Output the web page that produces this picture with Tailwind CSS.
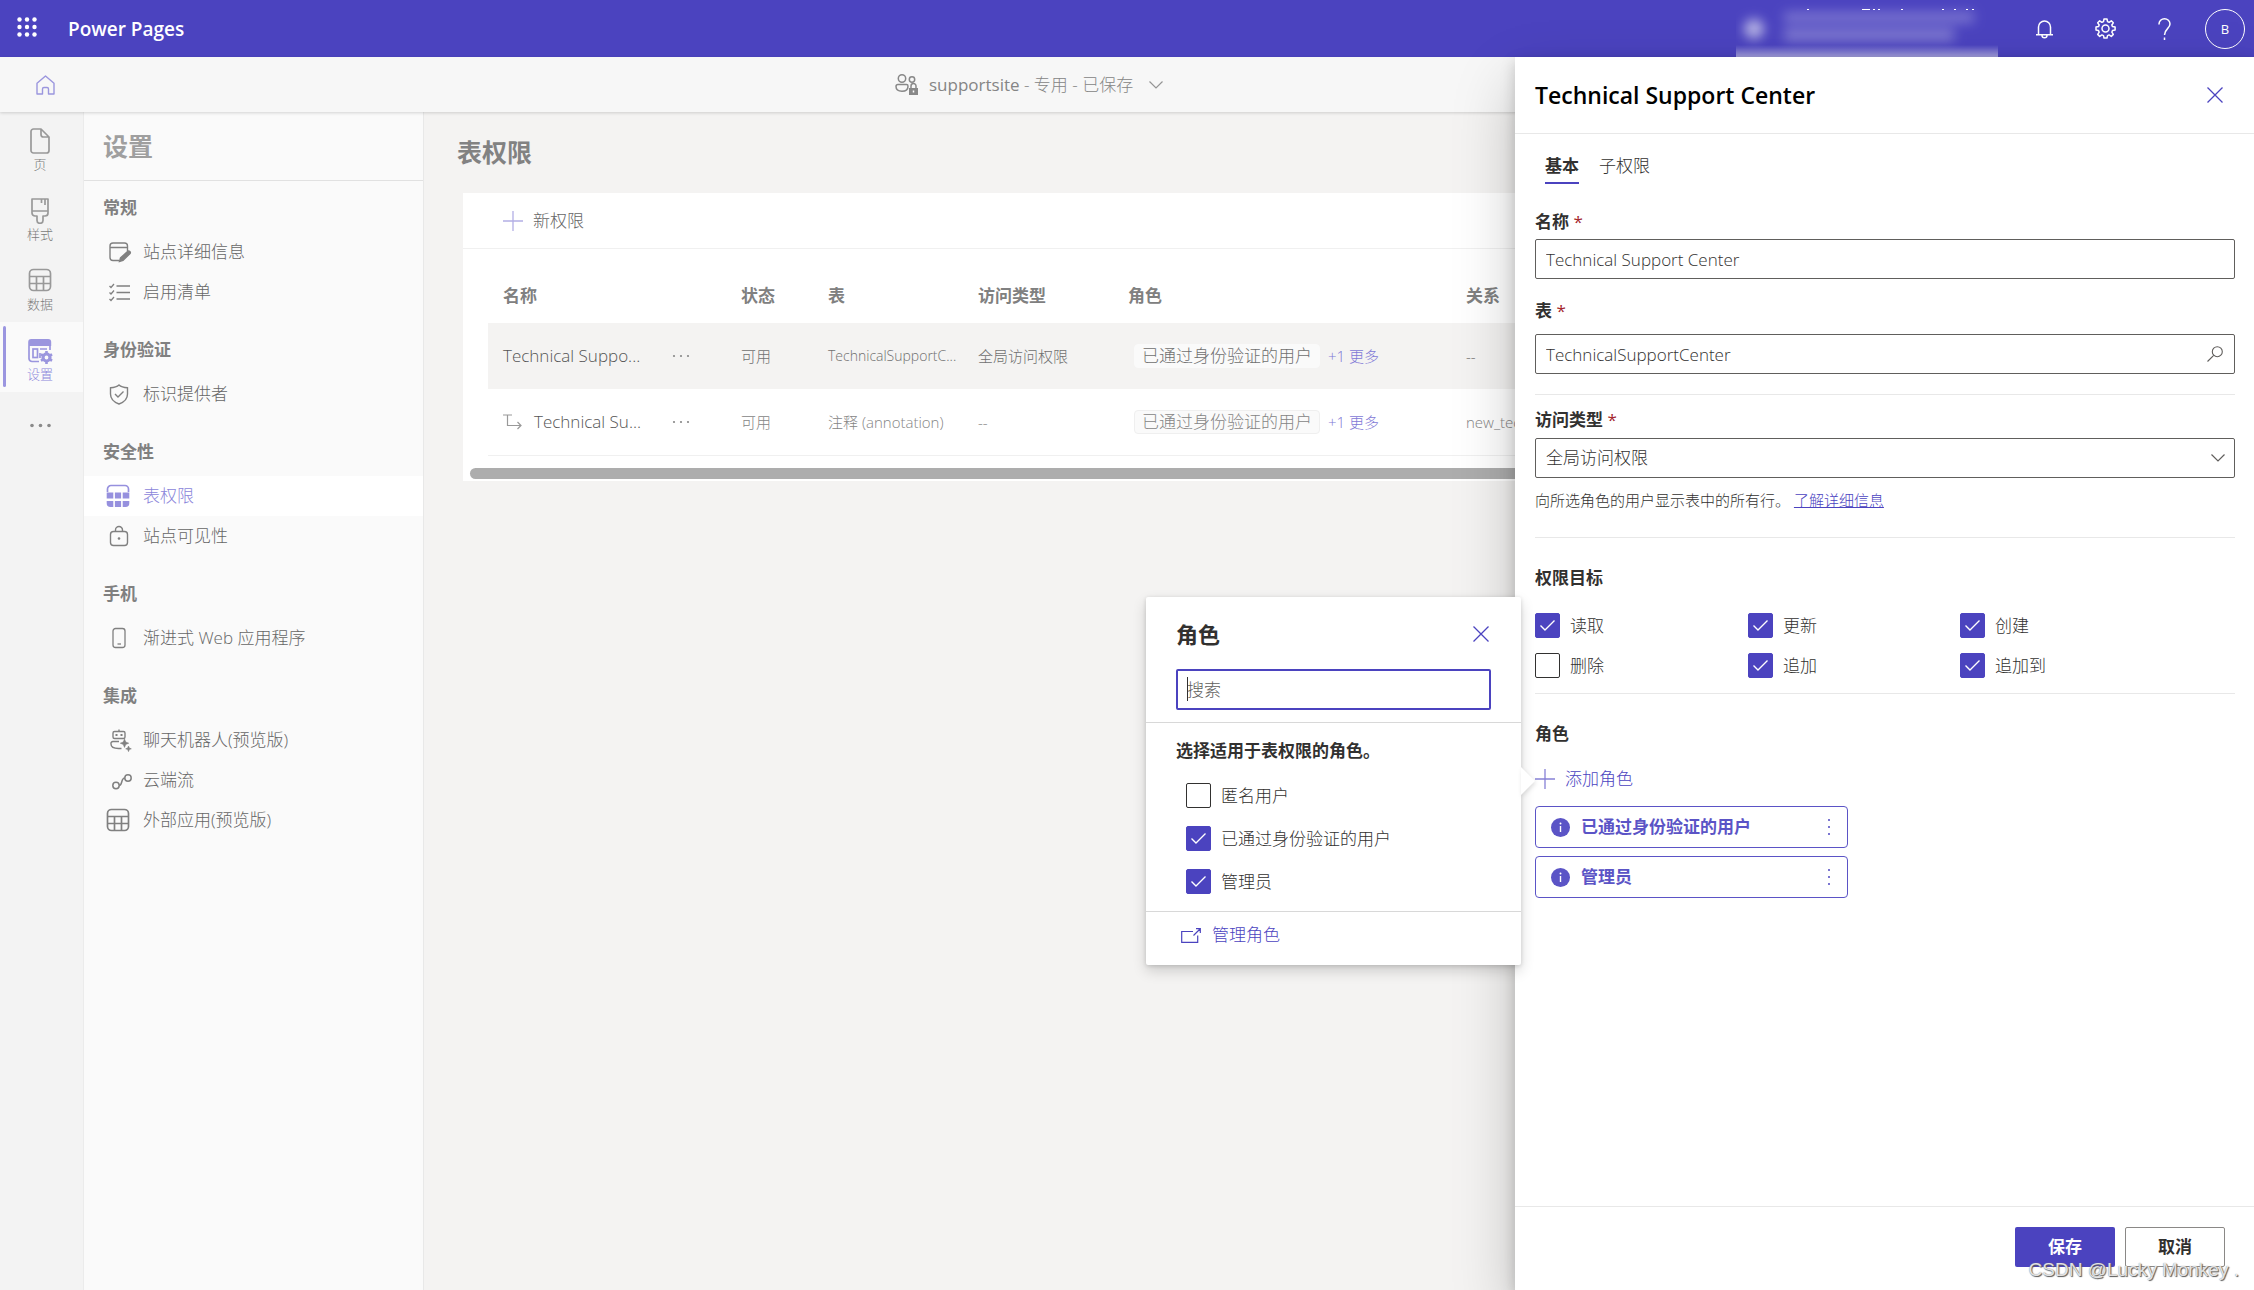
<!DOCTYPE html>
<html lang="zh-CN">
<head>
<meta charset="utf-8">
<title>Power Pages</title>
<script src="https://cdn.jsdelivr.net/npm/@tailwindcss/browser@4"></script>
</head>
<body class="relative flex h-screen flex-col overflow-hidden bg-[#f4f3f2] font-['Open_Sans','Noto_Sans_CJK_SC',sans-serif] text-[17px] leading-[22px] text-[#323130]">
<svg class="hidden">
  <symbol id="grid" viewBox="0 0 24 24"><rect x="1.5" y="1.5" width="21" height="21" rx="4" fill="none" stroke="currentColor" stroke-width="1.7"/><path d="M1.5 8.5h21M1.5 15.5h21M8.5 8.5v14M15.5 8.5v14" fill="none" stroke="currentColor" stroke-width="1.7"/></symbol>
  <symbol id="check" viewBox="0 0 25 25"><path d="M5.5 12.5l4.5 4.500L19.500 7.500" fill="none" stroke="#fff" stroke-width="1.400"/></symbol>
  <symbol id="close" viewBox="0 0 16 16"><path d="M.5.5l15 15M15.500.5l-15 15" fill="none" stroke="currentColor" stroke-width="1.300"/></symbol>
  <symbol id="plus" viewBox="0 0 20 20"><path d="M10 0v20M0 10h20" fill="none" stroke="currentColor" stroke-width="1.300"/></symbol>
  <symbol id="chev" viewBox="0 0 14 8"><path d="M.5.5L7 7 13.500.5" fill="none" stroke="currentColor" stroke-width="1.200"/></symbol>
  <symbol id="info" viewBox="0 0 19 19"><circle cx="9.500" cy="9.500" r="9.500" fill="currentColor"/><path d="M9.500 8v6" stroke="#fff" stroke-width="1.400"/><circle cx="9.500" cy="5.500" r="1" fill="#fff"/></symbol>
  <symbol id="more" viewBox="0 0 18 4"><g fill="currentColor"><circle cx="2" cy="2" r="1.100"/><circle cx="9" cy="2" r="1.100"/><circle cx="16" cy="2" r="1.100"/></g></symbol>
</svg>

<header class="flex h-[57px] shrink-0 items-center bg-[#4b43bf] pr-[9px] pl-[17px] text-white">
  <button aria-label="应用" class="mr-[31px] -mt-1"><svg width="20" height="20" viewBox="0 0 20 20" fill="#fff"><circle cx="2.500" cy="2.500" r="2.200"/><circle cx="10" cy="2.500" r="2.200"/><circle cx="17.500" cy="2.500" r="2.200"/><circle cx="2.500" cy="10" r="2.200"/><circle cx="10" cy="10" r="2.200"/><circle cx="17.500" cy="10" r="2.200"/><circle cx="2.500" cy="17.500" r="2.200"/><circle cx="10" cy="17.500" r="2.200"/><circle cx="17.500" cy="17.500" r="2.200"/></svg></button>
  <h1 class="text-[19px] leading-6 font-semibold">Power Pages</h1>
  <svg class="ml-auto h-[57px] w-[262px]" viewBox="0 0 262 57" aria-hidden="true">
    <defs>
      <filter id="soft" x="-30%" y="-60%" width="160%" height="220%"><feGaussianBlur stdDeviation="6"/></filter>
      <linearGradient id="fade" x1="0" y1="0" x2="0" y2="1"><stop offset="0" stop-color="#fff" stop-opacity="0"/><stop offset="1" stop-color="#fff" stop-opacity=".5"/></linearGradient>
    </defs>
    <g fill="#fff"><path d="M71 9h2v1h-2zM126 9h8v1h-8zM137 9h2v1h-2zM142 9h2v1h-2zM165 9h2v1h-2zM206 9h2v1h-2zM218 9h2v1h-2zM230 9h2v1h-2zM236 9h2v1h-2z"/></g>
    <g filter="url(#soft)" fill="#fff"><circle cx="18" cy="29" r="10" opacity=".6"/><rect x="48" y="12" width="190" height="11" opacity=".26"/><rect x="48" y="29" width="170" height="12" opacity=".3"/></g>
    <rect y="45" width="262" height="12" fill="url(#fade)"/>
  </svg>
  <div class="ml-[38px] flex items-center gap-[42px]">
    <button aria-label="通知"><svg width="17" height="20" viewBox="0 0 17 20" fill="none" stroke="#fff" stroke-width="1.500"><path d="M2.500 15.500V8a6 6 0 0 1 12 0v7.500M0 15.800h17M6 16.500a2.500 2.300 0 0 0 5 0"/></svg></button>
    <button aria-label="设置"><svg width="21" height="21" viewBox="0 0 21 21" fill="none" stroke="#fff" stroke-width="1.500" stroke-linejoin="round"><circle cx="10.500" cy="10.500" r="3.500"/><path d="M9 1h3l.5 2.600 1.600.7L16.300 2.800l2 2-1.500 2.200.7 1.600 2.600.5v3l-2.600.5-.7 1.600 1.500 2.200-2 2-2.200-1.500-1.600.7L12 20H9l-.5-2.400-1.600-.7-2.200 1.500-2-2 1.500-2.200-.7-1.600L1 12.100v-3l2.500-.5.7-1.600-1.500-2.200 2-2 2.200 1.500 1.600-.7z"/></svg></button>
    <button aria-label="帮助"><svg width="13" height="22" viewBox="0 0 13 22" fill="none" stroke="#fff" stroke-width="1.500"><path d="M1 6.500V6a5.500 5.200 0 0 1 11 0c0 4.500-5.500 5-5.500 11M6.500 19.500V22"/></svg></button>
    <button class="-ml-2 flex size-10 items-center justify-center rounded-full border border-white text-[13px]">B</button>
  </div>
</header>

<div class="z-10 flex h-[55px] shrink-0 items-center bg-[#f7f7f7] pl-9 text-[#959595] shadow-[0_1px_3px_rgba(0,0,0,0.16)]">
  <a href="#" aria-label="主页" class="text-[#9b96de]"><svg width="19" height="20" viewBox="0 0 19 20" fill="none" stroke="currentColor" stroke-width="1.400" stroke-linejoin="round"><path d="M1 8.300L9.500 1 18 8.300V19h-5.500v-5a1.500 1.500 0 0 0-1.500-1.500H8A1.500 1.500 0 0 0 6.500 14v5H1z"/></svg></a>
  <button class="ml-[840px] flex items-center">
    <svg width="24" height="22" viewBox="0 0 24 22" fill="none" stroke="#888" stroke-width="1.500"><circle cx="7" cy="4.500" r="3.700"/><circle cx="17" cy="5.500" r="2.700"/><path d="M3 10.500h8.500c1 0 1.500.8 1.500 1.700 0 3.300-2.500 5-6 5s-6-1.700-6-4.700c0-1.200.8-2 2-2z"/><rect x="14" y="14" width="9" height="7" fill="#888" stroke="none"/><path d="M16 14v-2a2.500 2.500 0 0 1 5 0v2"/><path d="M18.500 16.500v2" stroke="#fff"/></svg>
    <span class="ml-[10px] font-light text-[#858585]"><span class="font-normal text-[#858585]">supportsite</span> - 专用 - 已保存</span>
    <svg class="ml-4" width="14" height="8"><use href="#chev"/></svg>
  </button>
</div>

<div class="flex min-h-0 flex-1">
  <nav aria-label="工作区" class="flex w-[84px] shrink-0 flex-col border-r border-[#ebebeb] bg-[#f3f3f3] text-[13px] leading-4 font-light text-[#7c7c7c]">
    <a href="#" class="flex h-[70px] flex-col items-center gap-[2px] pt-4 pr-[3px]"><svg width="20" height="26" viewBox="0 0 20 26" fill="none" stroke="#999" stroke-width="1.700" stroke-linejoin="round"><path d="M3.500 1H11l8 8v13.500a2.500 2.500 0 0 1-2.500 2.500h-13A2.500 2.500 0 0 1 1 22.500v-19A2.500 2.500 0 0 1 3.500 1zM11 1v5.500A2.500 2.500 0 0 0 13.500 9H19"/></svg>页</a>
    <a href="#" class="flex h-[70px] flex-col items-center gap-[2px] pt-4 pr-[3px]"><svg width="20" height="26" viewBox="0 0 20 26" fill="none" stroke="#999" stroke-width="1.700" stroke-linejoin="round"><path d="M2 1h16v14a3 3 0 0 1-3 3h-2v4.500a3 2.800 0 0 1-6 0V18H5a3 3 0 0 1-3-3zM2 13h16M11.500 1v4M15 1v6"/></svg>样式</a>
    <a href="#" class="flex h-[70px] flex-col items-center gap-1 pt-4 pr-[3px]"><svg class="text-[#999]" width="24" height="24"><use href="#grid"/></svg>数据</a>
    <a href="#" aria-current="page" class="relative flex h-[70px] flex-col items-center gap-[2px] bg-[#fafafa] pt-4 pr-[3px] text-[#8b85da]"><span class="absolute top-1 left-[3px] h-[61px] w-[3px] rounded-full bg-[#9b96e0]"></span><svg width="26" height="26" viewBox="0 0 26 26" fill="none" stroke="#9b96de" stroke-width="1.700"><path d="M12 23.500H5a3 3 0 0 1-3-3V8M23 8v4"/><path d="M1.200 8V4a3 3 0 0 1 3-3h17a3 3 0 0 1 3 3v4z" fill="#9b96de" stroke="none"/><rect x="6" y="11" width="4.500" height="8.500"/><path d="M13 11h7M13 15v5"/><circle cx="19.500" cy="19.500" r="3.500" stroke-width="3.200"/><path d="M19.500 13v2.500M19.500 23.500V26M13.900 16.300l2.200 1.200M22.900 21.500l2.200 1.200M13.900 22.700l2.200-1.200M22.900 17.500l2.200-1.200" stroke-width="2.600"/></svg>设置</a>
    <button aria-label="更多" class="mt-[31px] flex justify-center pr-[3px] text-[#8a8a8a]"><svg width="21" height="5" viewBox="0 0 21 5" fill="currentColor"><circle cx="2" cy="2.500" r="1.800"/><circle cx="10.500" cy="2.500" r="1.800"/><circle cx="19" cy="2.500" r="1.800"/></svg></button>
  </nav>

  <aside class="w-[340px] shrink-0 border-r border-[#e8e8e8] bg-[#fafafa] font-light text-[#666]">
    <h2 class="h-[69px] border-b border-[#e1e1e1] pt-[18px] pl-[19px] text-[25px] leading-8 font-bold text-[#9f9f9f]">设置</h2>
    <div class="flex flex-col gap-[27px] pt-4">
      <section>
        <h3 class="mb-[13px] pl-[19px] font-bold text-[#808080]">常规</h3>
        <a href="#" class="flex h-10 items-center gap-[11px] pl-6"><svg width="24" height="24" viewBox="0 0 24 24" fill="none" stroke="#808080" stroke-width="1.400"><path d="M11 20.500H5a3 3 0 0 1-3-3V6a3 3 0 0 1 3-3h11.500a3 3 0 0 1 3 3v5M2 7.500h17.500"/><path d="M11.500 21.500l1-3.500 7-6.500a1.600 1.600 0 0 1 2.300 2.300L15 20.500z" fill="#808080"/></svg>站点详细信息</a>
        <a href="#" class="flex h-10 items-center gap-[11px] pl-6"><svg width="24" height="24" viewBox="0 0 24 24" fill="none" stroke="#808080" stroke-width="1.300"><path d="M8.500 6H22M8.500 12.500H22M8.500 19H22M1.500 6l1.500 1.500 3-3.500M1.500 12.500L3 14l3-3.500M1.500 19L3 20.500 6 17"/></svg>启用清单</a>
      </section>
      <section>
        <h3 class="mb-[13px] pl-[19px] font-bold text-[#808080]">身份验证</h3>
        <a href="#" class="flex h-10 items-center gap-[11px] pl-6"><svg width="24" height="24" viewBox="0 0 24 24" fill="none" stroke="#808080" stroke-width="1.400"><path d="M11 3c2 1.800 4.800 2.600 8.500 2.800V12c0 4.500-3 8-8.500 10-5.500-2-8.500-5.500-8.500-10V5.800C6.200 5.600 9 4.800 11 3zM7 12l3 3 5.500-5.500"/></svg>标识提供者</a>
      </section>
      <section>
        <h3 class="mb-[13px] pl-[19px] font-bold text-[#808080]">安全性</h3>
        <a href="#" aria-current="page" class="flex h-10 items-center gap-[13px] bg-white pl-[22px] text-[#8b85da]"><svg width="24" height="24" viewBox="0 0 24 24" fill="#9690de"><path d="M1.500 8V5A3.500 3.500 0 0 1 5 1.500h14A3.500 3.500 0 0 1 22.500 5v3" fill="none" stroke="#9690de" stroke-width="1.700"/><path d="M.7 8.500h6.600v6H.7zM8.900 8.500h6.200v6H8.900zM16.700 8.500h6.600v6h-6.600zM.7 17h6.600v6H4.500A3.800 3.800 0 0 1 .7 19.200zM8.900 17h6.200v6H8.900zM16.700 17h6.600v2.200a3.800 3.800 0 0 1-3.800 3.800h-2.800z"/></svg>表权限</a>
        <a href="#" class="flex h-10 items-center gap-[11px] pl-6"><svg width="24" height="24" viewBox="0 0 24 24" fill="none" stroke="#808080" stroke-width="1.400"><rect x="2.500" y="7.500" width="17" height="14" rx="3"/><path d="M7.500 7.500V6a3.500 3.500 0 0 1 7 0v1.500"/><circle cx="11" cy="14.500" r="1.300" fill="#808080" stroke="none"/></svg>站点可见性</a>
      </section>
      <section>
        <h3 class="mb-[13px] pl-[19px] font-bold text-[#808080]">手机</h3>
        <a href="#" class="flex h-10 items-center gap-[11px] pl-6"><svg width="24" height="24" viewBox="0 0 24 24" fill="none" stroke="#808080" stroke-width="1.300"><rect x="5" y="2.500" width="12" height="19" rx="2.500"/><path d="M9.500 18h3.500"/></svg><span>渐进式 Web 应用程序</span></a>
      </section>
      <section>
        <h3 class="mb-[13px] pl-[19px] font-bold text-[#808080]">集成</h3>
        <a href="#" class="flex h-10 items-center gap-[11px] pl-6"><svg width="24" height="24" viewBox="0 0 24 24" fill="none" stroke="#808080" stroke-width="1.400"><rect x="5" y="3.500" width="12" height="7" rx="1.500"/><path d="M11 1.500v2M11 13.500H5a2 2 0 0 0-2 2.500c0 3 3 4.500 7.500 4.500h3"/><path d="M8.500 6v2M13.500 6v2" stroke-width="2"/><path d="M16.500 11l1.200 3 3 1.200-3 1.200-1.200 3-1.200-3-3-1.200 3-1.200zM20.500 18l.8 2 2 .8-2 .8-.8 2-.8-2-2-.8 2-.8z" fill="#808080" stroke-width=".6"/></svg>聊天机器人(预览版)</a>
        <a href="#" class="flex h-10 items-center gap-[11px] pl-6"><svg width="24" height="24" viewBox="0 0 24 24" fill="none" stroke="#808080" stroke-width="1.500"><circle cx="8" cy="17.500" r="3.200"/><circle cx="20" cy="10" r="3.200"/><path d="M11.200 17.500c3.500 0 1.500-7.500 5.600-7.500"/></svg>云端流</a>
        <a href="#" class="flex h-10 items-center gap-[13px] pl-[22px]"><svg class="text-[#808080]" width="24" height="24"><use href="#grid"/></svg>外部应用(预览版)</a>
      </section>
    </div>
  </aside>

  <main class="min-w-0 flex-1 pt-6 pr-6 pl-[33px]">
    <h2 class="text-[25px] leading-8 font-bold text-[#828282]">表权限</h2>
    <div class="mt-[25px] ml-[6px] overflow-hidden bg-white">
      <div class="flex h-14 items-center border-b border-[#f0f0f0] pl-10 font-light text-[#666]">
        <button class="flex items-center gap-[10px]"><svg class="text-[#b3afe5]" width="20" height="20"><use href="#plus"/></svg>新权限</button>
      </div>
      <div class="pt-5 pl-[25px]">
        <table class="w-full table-fixed text-left text-[15px] font-light text-[#858585]">
          <colgroup><col class="w-[238px]"><col class="w-[87px]"><col class="w-[150px]"><col class="w-[150px]"><col class="w-[338px]"><col></colgroup>
          <thead class="text-[17px] text-[#808080]">
            <tr class="h-[54px]"><th class="pl-[15px] font-bold">名称</th><th class="pl-[15px] font-bold">状态</th><th class="pl-[15px] font-bold">表</th><th class="pl-[15px] font-bold">访问类型</th><th class="pl-[15px] font-bold">角色</th><th class="pl-[15px] font-bold">关系</th></tr>
          </thead>
          <tbody class="whitespace-nowrap">
            <tr class="h-[66px] bg-[#f4f3f2] text-[#707070]">
              <td class="pl-[15px]"><div class="flex items-center text-[17px] text-[#555]"><span class="w-[169px]">Technical Suppo...</span><svg class="text-[#888]" width="18" height="4"><use href="#more"/></svg></div></td>
              <td class="pl-[15px]">可用</td>
              <td class="pl-[15px] text-[14px]">TechnicalSupportC...</td>
              <td class="pl-[15px]">全局访问权限</td>
              <td class="pl-[21px]"><span class="mr-2 inline-block rounded border border-[#fafafa] bg-[#fafafa] px-[7px] text-[17px]">已通过身份验证的用户</span><a href="#" class="text-[#7f78d6]">+1 更多</a></td>
              <td class="pl-[15px]">--</td>
            </tr>
            <tr class="h-[66px] border-b border-[#f0f0f0]">
              <td class="pl-[15px]"><div class="flex items-center text-[17px] text-[#555]"><svg class="mr-3" width="19" height="16" viewBox="0 0 19 16" fill="none" stroke="#999" stroke-width="1.200"><path d="M0 1h9M4.500 1v10.500H18M14.500 8l3.500 3.500-3.500 3.500"/></svg><span class="w-[138px]">Technical Su...</span><svg class="text-[#888]" width="18" height="4"><use href="#more"/></svg></div></td>
              <td class="pl-[15px]">可用</td>
              <td class="pl-[15px]">注释 (annotation)</td>
              <td class="pl-[15px]">--</td>
              <td class="pl-[21px]"><span class="mr-2 inline-block rounded border border-[#efefef] bg-[#fafafa] px-[7px] text-[17px]">已通过身份验证的用户</span><a href="#" class="text-[#7f78d6]">+1 更多</a></td>
              <td class="pl-[15px]">new_technicalsupport</td>
            </tr>
          </tbody>
        </table>
      </div>
      <div class="mx-[7px] mt-3 mb-[2px] h-[11px] rounded-full bg-[#adadad]"></div>
    </div>
  </main>
</div>

<section role="dialog" aria-label="Technical Support Center" class="absolute top-[57px] right-0 bottom-0 z-20 flex w-[739px] flex-col bg-white shadow-[0_26px_58px_rgba(0,0,0,0.22),0_5px_14px_rgba(0,0,0,0.18)]">
  <div class="flex h-[77px] shrink-0 items-center justify-between border-b border-[#e8e8e8] pr-[31px] pl-5">
    <h2 class="text-[23px] leading-8 font-semibold text-black">Technical Support Center</h2>
    <button aria-label="关闭" class="text-[#4b43bf]"><svg width="16" height="16"><use href="#close"/></svg></button>
  </div>
  <form class="flex-1 pt-5 pr-[19px] pl-5 font-light">
    <div class="flex gap-5 pl-[10px] leading-6">
      <button type="button" class="border-b-2 border-[#4b43bf] pb-1 font-bold">基本</button>
      <button type="button" class="border-b-2 border-transparent pb-1">子权限</button>
    </div>
    <label for="name" class="mt-[27px] block font-bold">名称 <span class="font-normal text-[#a4262c]">*</span></label>
    <input id="name" value="Technical Support Center" class="mt-[6px] block h-10 w-full rounded-xs border border-[#605e5c] px-[10px] outline-none">
    <label for="table" class="mt-[21px] block font-bold">表 <span class="font-normal text-[#a4262c]">*</span></label>
    <div class="relative mt-3">
      <input id="table" value="TechnicalSupportCenter" class="block h-10 w-full rounded-xs border border-[#605e5c] px-[10px] outline-none">
      <svg class="absolute top-3 right-3" width="16" height="16" viewBox="0 0 16 16" fill="none" stroke="#605e5c" stroke-width="1.100"><circle cx="10.300" cy="5.700" r="5"/><path d="M6.700 9.300L.5 15.500"/></svg>
    </div>
    <hr class="mt-5 border-[#e8e8e8]">
    <label for="access" class="mt-[14px] block font-bold">访问类型 <span class="font-normal text-[#a4262c]">*</span></label>
    <div class="relative mt-[7px]">
      <select id="access" class="block h-10 w-full appearance-none rounded-xs border border-[#605e5c] px-[10px] outline-none"><option>全局访问权限</option></select>
      <svg class="pointer-events-none absolute top-4 right-[10px] text-[#605e5c]" width="14" height="8"><use href="#chev"/></svg>
    </div>
    <p class="mt-3 text-[15px] leading-5">向所选角色的用户显示表中的所有行。 <a href="#" class="text-[#4b43bf] underline">了解详细信息</a></p>
    <hr class="mt-[27px] border-[#e8e8e8]">
    <h3 class="mt-[29px] font-bold">权限目标</h3>
    <div class="mt-6 grid grid-cols-[213px_212px_1fr] gap-y-[15px]">
      <label class="flex items-center gap-[10px]"><span class="relative flex"><input type="checkbox" checked class="peer size-[25px] appearance-none rounded-xs border border-[#323130] checked:border-[#4b43bf] checked:bg-[#4b43bf]"><svg class="pointer-events-none absolute inset-0 hidden peer-checked:block" width="25" height="25"><use href="#check"/></svg></span>读取</label>
      <label class="flex items-center gap-[10px]"><span class="relative flex"><input type="checkbox" checked class="peer size-[25px] appearance-none rounded-xs border border-[#323130] checked:border-[#4b43bf] checked:bg-[#4b43bf]"><svg class="pointer-events-none absolute inset-0 hidden peer-checked:block" width="25" height="25"><use href="#check"/></svg></span>更新</label>
      <label class="flex items-center gap-[10px]"><span class="relative flex"><input type="checkbox" checked class="peer size-[25px] appearance-none rounded-xs border border-[#323130] checked:border-[#4b43bf] checked:bg-[#4b43bf]"><svg class="pointer-events-none absolute inset-0 hidden peer-checked:block" width="25" height="25"><use href="#check"/></svg></span>创建</label>
      <label class="flex items-center gap-[10px]"><span class="relative flex"><input type="checkbox" class="peer size-[25px] appearance-none rounded-xs border border-[#323130] checked:border-[#4b43bf] checked:bg-[#4b43bf]"><svg class="pointer-events-none absolute inset-0 hidden peer-checked:block" width="25" height="25"><use href="#check"/></svg></span>删除</label>
      <label class="flex items-center gap-[10px]"><span class="relative flex"><input type="checkbox" checked class="peer size-[25px] appearance-none rounded-xs border border-[#323130] checked:border-[#4b43bf] checked:bg-[#4b43bf]"><svg class="pointer-events-none absolute inset-0 hidden peer-checked:block" width="25" height="25"><use href="#check"/></svg></span>追加</label>
      <label class="flex items-center gap-[10px]"><span class="relative flex"><input type="checkbox" checked class="peer size-[25px] appearance-none rounded-xs border border-[#323130] checked:border-[#4b43bf] checked:bg-[#4b43bf]"><svg class="pointer-events-none absolute inset-0 hidden peer-checked:block" width="25" height="25"><use href="#check"/></svg></span>追加到</label>
    </div>
    <hr class="mt-[15px] border-[#e8e8e8]">
    <h3 class="mt-[29px] font-bold">角色</h3>
    <div class="relative mt-[22px]">
      <button type="button" class="flex h-6 items-center gap-[10px] text-[#4b43bf]"><svg class="text-[#8781d6]" width="20" height="20"><use href="#plus"/></svg>添加角色</button>
      <div role="dialog" aria-label="角色" class="absolute -top-[170px] right-full mr-[14px] w-[375px] rounded-xs bg-white pt-[22px] pb-[18px] shadow-[0_6px_14px_rgba(0,0,0,0.16),0_1px_4px_rgba(0,0,0,0.14)]">
        <svg class="absolute top-[169px] left-full drop-shadow-[1px_2px_2px_rgba(0,0,0,0.12)]" width="15" height="30" viewBox="0 0 15 30"><path d="M0 1l14 14L0 29z" fill="#fff"/></svg>
        <div class="flex items-center justify-between px-[30px]">
          <h3 class="text-[22px] leading-[30px] font-bold">角色</h3>
          <button type="button" aria-label="关闭" class="mr-[2px] text-[#4b43bf]"><svg width="16" height="16"><use href="#close"/></svg></button>
        </div>
        <div class="relative mx-[30px] mt-5">
          <input aria-label="搜索" placeholder="搜索" class="block h-[41px] w-full rounded-xs border-2 border-[#4b43bf] px-[9px] outline-none placeholder:text-[#605e5c]">
          <span class="absolute top-2 left-[11px] h-6 w-px bg-[#323130]"></span>
        </div>
        <hr class="mt-3 border-[#d8d8d8]">
        <p class="mt-[17px] px-[30px] font-bold">选择适用于表权限的角色。</p>
        <div class="mt-[21px] flex flex-col gap-[18px] px-10">
          <label class="flex items-center gap-[10px]"><span class="relative flex"><input type="checkbox" class="peer size-[25px] appearance-none rounded-xs border border-[#323130] checked:border-[#4b43bf] checked:bg-[#4b43bf]"><svg class="pointer-events-none absolute inset-0 hidden peer-checked:block" width="25" height="25"><use href="#check"/></svg></span>匿名用户</label>
          <label class="flex items-center gap-[10px]"><span class="relative flex"><input type="checkbox" checked class="peer size-[25px] appearance-none rounded-xs border border-[#323130] checked:border-[#4b43bf] checked:bg-[#4b43bf]"><svg class="pointer-events-none absolute inset-0 hidden peer-checked:block" width="25" height="25"><use href="#check"/></svg></span>已通过身份验证的用户</label>
          <label class="flex items-center gap-[10px]"><span class="relative flex"><input type="checkbox" checked class="peer size-[25px] appearance-none rounded-xs border border-[#323130] checked:border-[#4b43bf] checked:bg-[#4b43bf]"><svg class="pointer-events-none absolute inset-0 hidden peer-checked:block" width="25" height="25"><use href="#check"/></svg></span>管理员</label>
        </div>
        <hr class="mt-[17px] border-[#d8d8d8]">
        <a href="#" class="mt-[11px] ml-[35px] flex h-6 items-center gap-[11px] text-[#4b43bf]"><svg width="20" height="15" viewBox="0 0 20 15" fill="none" stroke="currentColor" stroke-width="1.200"><path d="M12 3.500H.7v10.800h16V7.500M12.500 7.500L19 1M15 .7h4.300V5"/></svg>管理角色</a>
      </div>
    </div>
    <ul class="mt-[15px] flex w-[313px] flex-col gap-2 font-bold text-[#5b54c6]">
      <li class="flex h-[42px] items-center rounded border border-[#5b54c6] pr-[9px] pl-[15px]"><svg width="19" height="19"><use href="#info"/></svg><span class="ml-[11px] flex-1">已通过身份验证的用户</span><button type="button" aria-label="更多"><svg class="rotate-90" width="18" height="4"><use href="#more"/></svg></button></li>
      <li class="flex h-[42px] items-center rounded border border-[#5b54c6] pr-[9px] pl-[15px]"><svg width="19" height="19"><use href="#info"/></svg><span class="ml-[11px] flex-1">管理员</span><button type="button" aria-label="更多"><svg class="rotate-90" width="18" height="4"><use href="#more"/></svg></button></li>
    </ul>
  </form>
  <div class="flex h-[84px] shrink-0 justify-end gap-[10px] border-t border-[#e8e8e8] pt-5 pr-[29px] font-bold">
    <button class="h-10 w-[100px] rounded-xs bg-[#4b43bf] text-white">保存</button>
    <button class="h-10 w-[100px] rounded-xs border border-[#8a8886] bg-white">取消</button>
  </div>
  <span class="absolute right-[15px] bottom-[9px] font-['Liberation_Sans',sans-serif] text-[19px] text-white/80 [text-shadow:1px_1px_1px_#555,0_0_1px_#777]">CSDN @Lucky Monkey .</span>
</section>
</body>
</html>
